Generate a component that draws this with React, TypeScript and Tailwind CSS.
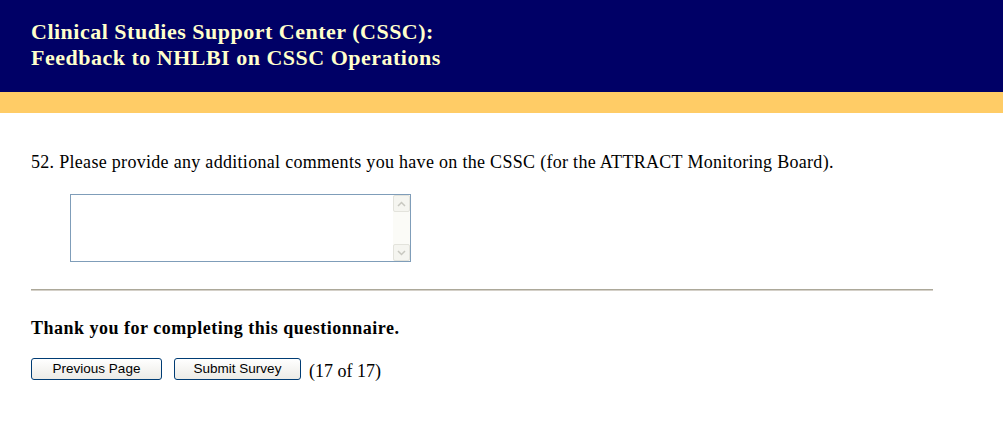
import React from 'react';

const serif = "font-['Liberation_Serif','Times_New_Roman',serif]";

export default function App() {
    return (
        <div className={`${serif} bg-white min-h-[421px] text-black`}>
            {/* Header */}
            <div className="bg-[#000066] h-[92px] pl-[31px] pt-[19px]">
                <h1 className="text-[#ffffcc] font-bold text-[22px] leading-[26px] tracking-[0.5px]">
                    Clinical Studies Support Center (CSSC):
                    <br />
                    Feedback to NHLBI on CSSC Operations
                </h1>
            </div>
            <div className="bg-[#ffcc66] h-[21px]" />

            <div className="pl-[31px] pt-[38px]">
                <p className="text-[18px] leading-[22px] tracking-[0.3px]">
                    52. Please provide any additional comments you have on the CSSC (for the ATTRACT Monitoring Board).
                </p>

                <div className="ml-[39px] mt-[21px] w-[341px] h-[68px] border border-[#7f9db9] flex">
                    <div className="flex-1" />
                    <div className="w-[17px] bg-[#fbfbf7] flex flex-col justify-between">
                        <div className="h-[17px] border border-[#e3e3dc] rounded-[2px] bg-[#f5f5f0] flex items-center justify-center">
                            <svg width="9" height="6" viewBox="0 0 9 6">
                                <path d="M1 5 L4.5 1.5 L8 5" stroke="#c8c8c0" strokeWidth="1.5" fill="none" />
                            </svg>
                        </div>
                        <div className="h-[17px] border border-[#e3e3dc] rounded-[2px] bg-[#f5f5f0] flex items-center justify-center">
                            <svg width="9" height="6" viewBox="0 0 9 6">
                                <path d="M1 1 L4.5 4.5 L8 1" stroke="#c8c8c0" strokeWidth="1.5" fill="none" />
                            </svg>
                        </div>
                    </div>
                </div>

                <div className="mt-[27px] w-[902px] h-[2px] bg-[#aca899] border-b border-[#d4d0c8]" />

                <p className="mt-[26px] font-bold text-[18px] leading-[22px] tracking-[0.5px]">
                    Thank you for completing this questionnaire.
                </p>

                <div className="mt-[17px] flex items-center">
                    <button className="w-[131px] h-[22px] border border-[#003c74] rounded-[3px] bg-gradient-to-b from-white to-[#ecebe6] font-['Liberation_Sans',Arial,sans-serif] text-[13.5px] leading-none text-black">
                        Previous Page
                    </button>
                    <button className="ml-[12px] w-[127px] h-[22px] border border-[#003c74] rounded-[3px] bg-gradient-to-b from-white to-[#ecebe6] font-['Liberation_Sans',Arial,sans-serif] text-[13.5px] leading-none text-black">
                        Submit Survey
                    </button>
                    <span className="ml-[8px] text-[18px] leading-[22px] mt-[4px]">(17 of 17)</span>
                </div>
            </div>
        </div>
    );
}
